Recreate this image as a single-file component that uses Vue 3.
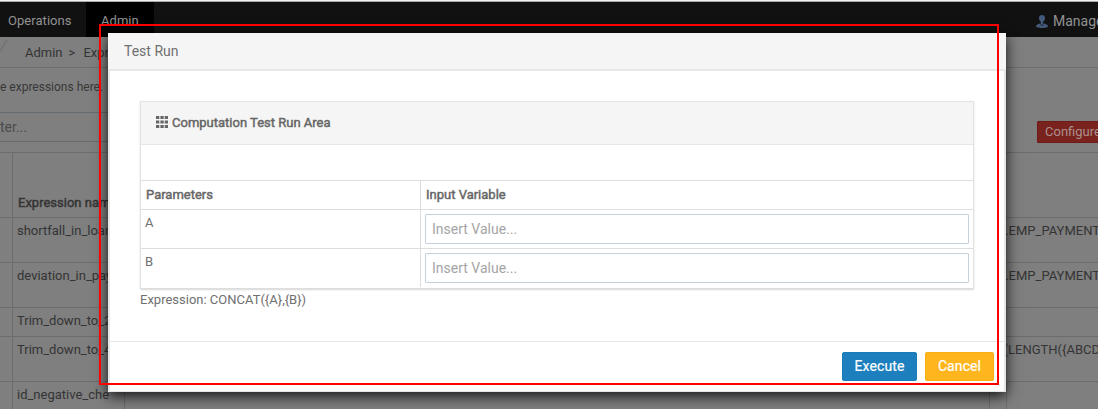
<script setup>
const rows = [
  { name: 'shortfall_in_loan', value: 's.EMP_PAYMENT', h: 45 },
  { name: 'deviation_in_pay', value: 's.EMP_PAYMENT', h: 45 },
  { name: 'Trim_down_to_2', value: '', h: 29 },
  { name: 'Trim_down_to_4', value: '(LENGTH({ABCD', h: 45 },
  { name: 'id_negative_che', value: '', h: 45 },
]
const params = ['A', 'B']
</script>

<template>
  <div class="page">
    <nav class="nav">
      <span class="tab ops">Operations</span>
      <span class="tab admin">Admin</span>
      <span class="user">
        <svg width="12" height="13" viewBox="0 0 12 13">
          <path d="M6 0C4.200 0 3 1.200 3 3 3 4.900 4 6.300 4.900 6.900V8.400C2 8.700 0 9.700 0 11.300 0 12.600 2.600 13 6 13S12 12.600 12 11.300C12 9.700 10 8.700 7.100 8.400V6.900C8 6.300 9 4.900 9 3 9 1.200 7.800 0 6 0Z" fill="#43597a" />
          <path d="M4.200 8.500L6 11 7.800 8.500" fill="none" stroke="#1a222e" stroke-width=".8" />
        </svg>
        Manager
      </span>
    </nav>
    <div class="crumbs">
      <svg class="slash" width="9" height="30" viewBox="0 0 9 30"><path d="M-1 16L7 3" stroke="#737373" stroke-width="1.500" /></svg>
      <span>Admin</span><span class="sep">&gt;</span><span>Expr</span>
    </div>
    <div class="intro">e expressions here.</div>
    <div class="filter">
      <div class="search">ter...</div>
      <div class="configure">Configure</div>
    </div>
    <div class="grid">
      <div class="line head"><div class="idx"></div><div class="name">Expression name</div></div>
      <div v-for="r in rows" :key="r.name" class="line" :style="{ height: r.h + 'px' }">
        <div class="idx"></div>
        <div class="name">{{ r.name }}</div>
        <div class="value">{{ r.value }}</div>
      </div>
    </div>
    <div class="below"></div>

    <section class="modal">
      <header class="title">Test Run</header>
      <div class="body">
        <div class="panel">
          <div class="panel-head">
            <svg width="12" height="12" viewBox="0 0 12 12" fill="#666">
              <path d="M0 0h3.300v3H0zM4.400 0h3.300v3H4.400zM8.700 0H12v3H8.700zM0 4.500h3.300v3H0zM4.400 4.500h3.300v3H4.400zM8.700 4.500H12v3H8.700zM0 9h3.300v3H0zM4.400 9h3.300v3H4.400zM8.700 9H12v3H8.700z" />
            </svg>
            <span>Computation Test Run Area</span>
          </div>
          <div class="blank"></div>
          <div class="prow phead"><div class="c1">Parameters</div><div class="c2">Input Variable</div></div>
          <div v-for="p in params" :key="p" class="prow">
            <div class="c1">{{ p }}</div>
            <div class="c2"><input type="text" placeholder="Insert Value..." /></div>
          </div>
        </div>
        <div class="expr">Expression: CONCAT({A},{B})</div>
      </div>
      <footer class="foot">
        <button class="btn execute">Execute</button>
        <button class="btn cancel">Cancel</button>
      </footer>
    </section>
    <div class="outline"></div>
  </div>
</template>

<style>
body { margin: 0; overflow: hidden; }
</style>

<style scoped>
* { box-sizing: border-box; }
.page { position: relative; width: 1098px; height: 409px; overflow: hidden; background: #7f7f7f; font: 13px/16px Roboto, sans-serif; color: #343434; white-space: nowrap; }
.nav { height: 37px; border-top: 1px solid #f1f1f1; background: #111; display: flex; color: #929292; font-size: 14px; line-height: 39px; box-shadow: inset 0 1px #a9adad; }
.tab { height: 35px; margin-top: 1px; line-height: 38px; flex: none; font-size: 13px; letter-spacing: .05px; }
.ops { width: 86px; padding-left: 8px; }
.admin { width: 68px; padding-left: 15px; background: #000; }
.user { margin-left: 882px; display: flex; flex: none; align-items: flex-start; gap: 5px; line-height: 40px; }
.user svg { margin-top: 14px; flex: none; }
.crumbs { height: 31px; border-bottom: 1px solid #6e6e6e; display: flex; line-height: 31px; }
.slash { margin-right: 16px; }
.sep { margin: 0 8px 0 6px; }
.intro { height: 44px; font-size: 12px; line-height: 39px; color: #383838; }
.filter { height: 40px; display: flex; }
.search { width: 160px; flex: none; height: 30px; border: solid #636a70; border-width: 1px 0; line-height: 29px; font-size: 14px; color: #4b4b4b; }
.configure { margin: 9px 0 0 877px; flex: none; width: 90px; height: 22px; border: 1px solid #6c1b17; border-radius: 1px; background: #7a231e; color: #a98f8d; padding-left: 7px; line-height: 20px; }
.grid { border-top: 1px solid #6c6c6c; }
.line { display: flex; height: 45px; border-bottom: 1px solid #6c6c6c; }
.head { height: 65px; align-items: stretch; }
.idx { width: 13px; flex: none; border-right: 1px solid #6c6c6c; }
.name { width: 987px; flex: none; padding: 5px 0 0 4px; }
.head .name { padding: 42px 0 0 5px; -webkit-text-stroke: .45px #343434; }
.value { width: 100px; flex: none; display: flex; justify-content: flex-end; padding-top: 5px; }
.below { position: absolute; left: 124px; top: 381px; width: 883px; height: 28px; border: solid #6c6c6c; border-width: 1px 1px 0; background: linear-gradient(#6c6c6c, #6c6c6c) 864px 0 / 1px 28px no-repeat #7f7f7f; }
.modal { position: absolute; left: 108px; top: 33px; width: 898px; height: 359px; background: #fff; border: solid #e5e5e5; border-width: 0 2px 1px; box-shadow: 0 4px 13px rgba(0,0,0,.85); color: #707070; }
.title { height: 38px; margin: 0 -2px; background: #f5f5f5; border-bottom: 2px solid #e7e7e7; padding-left: 16px; line-height: 37px; font-size: 14px; }
.body { height: 270px; padding: 30px; }
.panel { width: 834px; height: 188px; border: 1px solid #e3e3e3; border-bottom-color: #ddd; box-shadow: 0 1px 2px rgba(0,0,0,.16); border-radius: 1px; }
.panel-head { height: 43px; background: #f5f5f5; border-bottom: 1px solid #e7e7e7; display: flex; align-items: center; gap: 4px; padding-left: 15px; color: #666; -webkit-text-stroke: .45px #666; }
.panel-head svg { -webkit-text-stroke: 0; margin-top: -2px; }
.blank { height: 35px; }
.prow { display: flex; height: 39px; border-top: 1px solid #ddd; }
.phead { height: 29px; border-top: 1px solid #ddd; color: #666; -webkit-text-stroke: .45px #666; }
.c1 { width: 280px; flex: none; border-right: 1px solid #ddd; padding: 5px 0 0 4px; }
.c2 { flex: 1; padding: 4px; }
.phead .c1, .phead .c2 { padding: 6px 0 0 5px; }
input { display: block; width: 544px; height: 30px; border: 1px solid #c5d0dc; border-radius: 1px; padding: 1px 6px; font: 14px Roboto, sans-serif; color: #777; background: #fff; }
input::placeholder { color: #a5a5a5; opacity: 1; }
.expr { margin-top: 3px; }
.foot { height: 50px; border-top: 1px solid #e5e5e5; display: flex; justify-content: flex-end; gap: 8px; padding: 10px 10px 0; }
.btn { height: 29px; border-radius: 2px; border: 1px solid; padding: 0 0 1px; font: 14px Roboto, sans-serif; -webkit-text-stroke: .2px #fff; letter-spacing: .1px; color: #fff; }
.execute { width: 75px; background: #1d7fbd; border-color: #197bb9; }
.cancel { width: 69px; background: #ffb61e; border-color: #f9ae12; }
.outline { position: absolute; left: 99px; top: 24px; width: 900px; height: 361px; border: 2px solid #f00; pointer-events: none; }
</style>
